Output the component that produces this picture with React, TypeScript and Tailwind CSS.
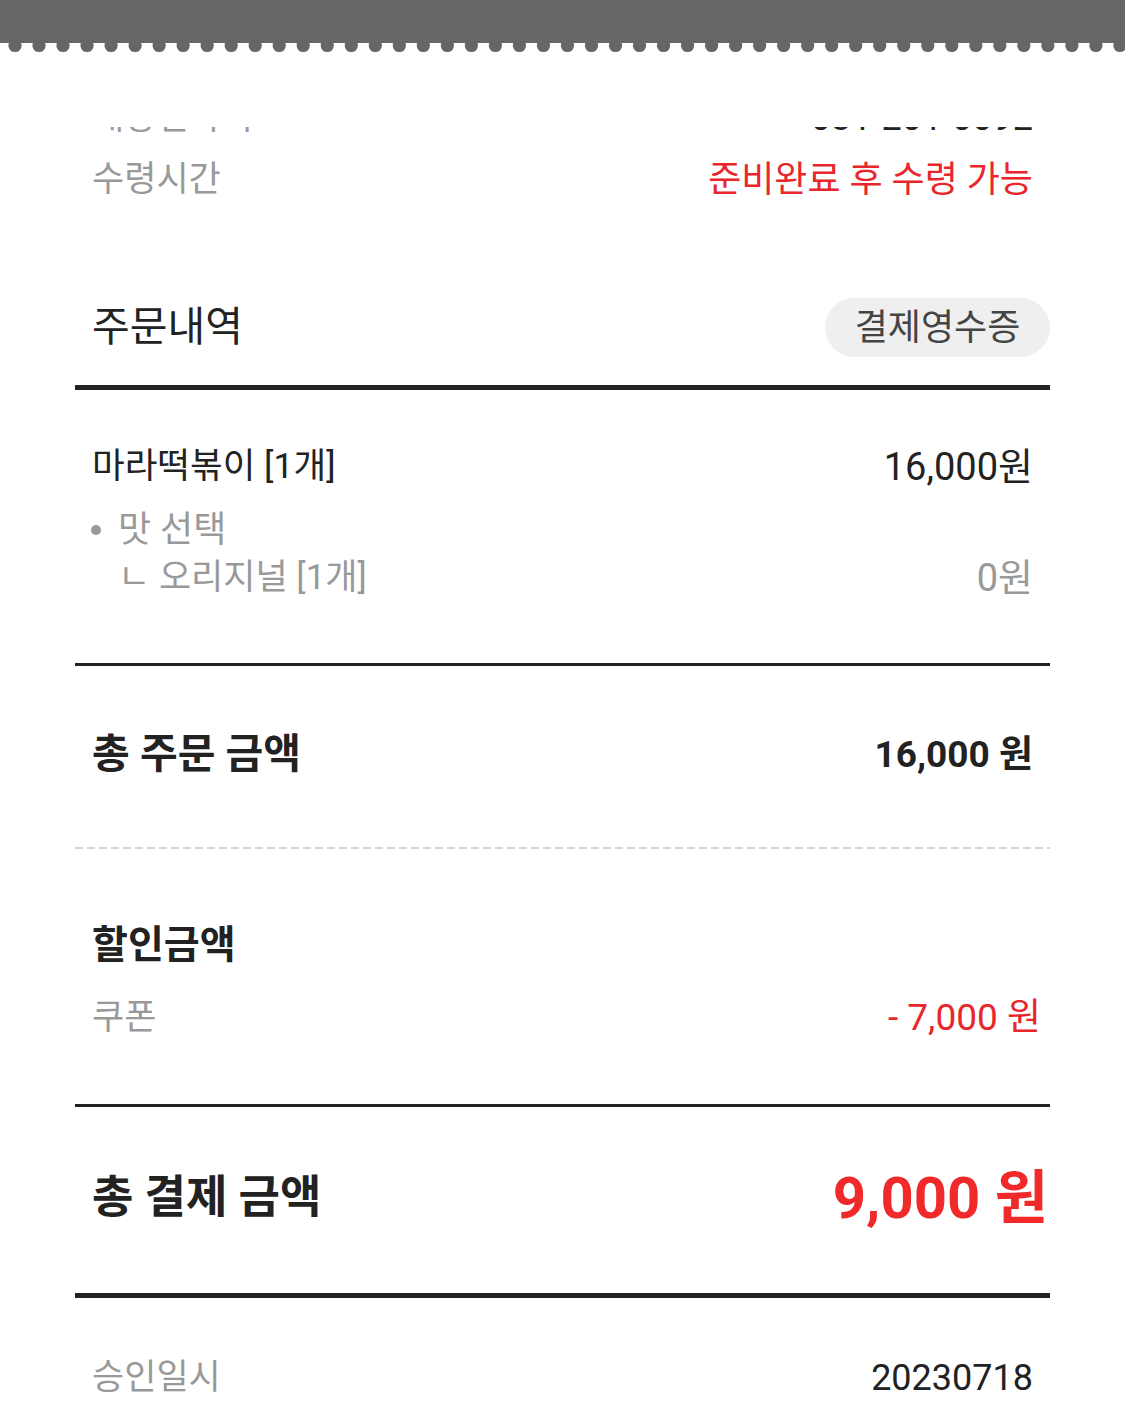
import React from "react";

const FONT = { fontFamily: '"Roboto", "Noto Sans CJK KR", sans-serif' };

function Scallop() {
  const circles = [];
  for (let i = 0; i < 48; i++) {
    circles.push(<circle key={i} cx={15 + i * 24.02} cy={2.5} r={6.6} fill="#666666" />);
  }
  return (
    <svg width="1125" height="10" viewBox="0 0 1125 10" className="block">
      {circles}
    </svg>
  );
}

export default function App() {
  return (
    <div className="w-[1125px] h-[1403px] overflow-hidden bg-white relative" style={FONT}>
      <div className="h-[43px] bg-[#666666]" />
      <Scallop />
      <div className="h-[74px]" />
      <div className="overflow-hidden px-[75px]">
        <div className="px-[17px]">
          <div className="mt-[-33px] h-[48px] flex items-center justify-between">
            <span className="text-[35px] text-[#999999]">매장연락처</span>
            <span className="text-[36px] text-[#222222]">031-201-0092</span>
          </div>
          <div className="mt-[14px] h-[48px] flex items-center justify-between text-[35px]">
            <span className="text-[#999999]">수령시간</span>
            <span className="text-[36px] text-[#e8262b]">준비완료 후 수령 가능</span>
          </div>
        </div>

        <div className="mt-[94px] h-[59px] flex items-center justify-between">
          <span className="pl-[17px] text-[41px] text-[#222222]">주문내역</span>
          <span className="h-[59px] w-[225px] rounded-full bg-[#efefef] flex items-center justify-center text-[36px] text-[#444444]">
            결제영수증
          </span>
        </div>
        <div className="mt-[28px] h-[5px] bg-[#222222]" />

        <div className="px-[17px]">
          <div className="mt-[53px] h-[48px] flex items-center justify-between text-[#222222]">
            <span className="text-[35.5px]">마라떡볶이 [1개]</span>
            <span className="text-[38px]">16,000원</span>
          </div>
          <div className="mt-[15px] h-[48px] flex items-center text-[36px] text-[#999999]">
            <span className="w-[10px] h-[10px] rounded-full bg-[#999999] ml-[-1px] mr-[17px]" />
            <span>맛 선택</span>
          </div>
          <div className="h-[48px] flex items-center justify-between text-[#999999]">
            <span className="pl-[26px] text-[35px]">ㄴ 오리지널 [1개]</span>
            <span className="text-[38px]">0원</span>
          </div>
        </div>
        <div className="mt-[61px] h-[3px] bg-[#222222]" />

        <div className="px-[17px]">
          <div className="mt-[65px] h-[48px] flex items-center justify-between text-[#222222] font-bold">
            <span className="text-[41px]">총 주문 금액</span>
            <span className="text-[37px]">16,000 원</span>
          </div>
        </div>
        <div className="mt-[68px] h-[2px] bg-[repeating-linear-gradient(to_right,#d4d4d4_0px,#d4d4d4_8px,transparent_8px,transparent_12px)]" />

        <div className="px-[17px]">
          <div className="mt-[72px] h-[48px] flex items-center text-[39px] font-bold text-[#222222]">
            <span>할인금액</span>
          </div>
          <div className="mt-[25px] h-[48px] flex items-center justify-between">
            <span className="text-[35px] text-[#999999]">쿠폰</span>
            <span className="text-[37px] text-[#e8262b] mr-[-8px]">- 7,000 원</span>
          </div>
        </div>
        <div className="mt-[62px] h-[3px] bg-[#222222]" />

        <div className="px-[17px]">
          <div className="mt-[59px] h-[64px] flex items-center justify-between font-bold">
            <span className="text-[45px] text-[#222222]">총 결제 금액</span>
            <span className="text-[58px] text-[#f02a2a] mr-[-15px]">9,000 원</span>
          </div>
        </div>
        <div className="mt-[63px] h-[5px] bg-[#222222]" />

        <div className="px-[17px]">
          <div className="mt-[56px] h-[48px] flex items-center justify-between">
            <span className="text-[35px] text-[#999999]">승인일시</span>
            <span className="text-[36px] text-[#222222]">20230718</span>
          </div>
        </div>
      </div>
    </div>
  );
}
